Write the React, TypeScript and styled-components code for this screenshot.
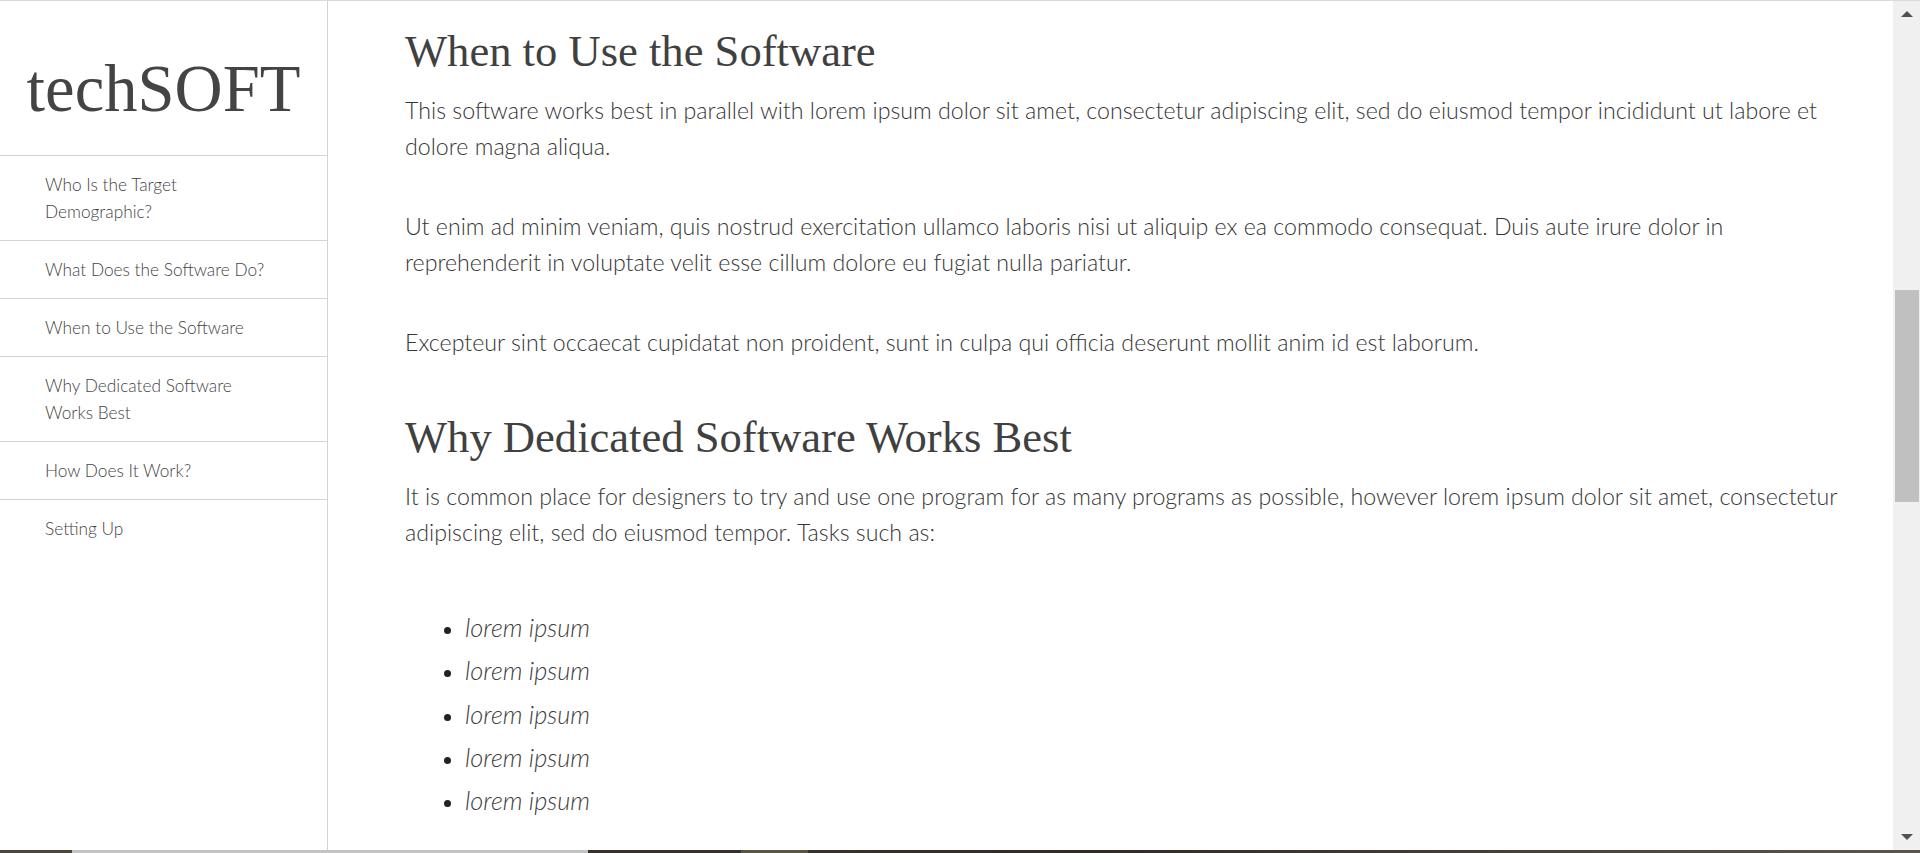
import React from "react";
import styled, { createGlobalStyle } from "styled-components";

const GlobalStyle = createGlobalStyle`
  html, body {
    margin: 0;
    padding: 0;
    height: 100%;
    overflow: hidden;
    background: #fff;
  }
  #root {
    height: 100%;
  }
`;

const Page = styled.div`
  display: flex;
  flex-direction: column;
  height: 853px;
  border-top: 1px solid #dadada;
  box-sizing: border-box;
  font-family: Lato, "Open Sans", sans-serif;
  color: #363636;
`;

const Body = styled.div`
  display: flex;
  flex: 1;
  min-height: 0;
`;

const Nav = styled.nav`
  width: 327px;
  flex-shrink: 0;
  border-right: 1px solid #d3d3d3;
  display: flex;
  flex-direction: column;
`;

const Brand = styled.header`
  height: 155px;
  box-sizing: border-box;
  padding-top: 50px;
  border-bottom: 1px solid #d3d3d3;
  text-align: center;
  font-family: "Liberation Serif", "Times New Roman", serif;
  font-size: 66.6px;
  line-height: 75px;
  color: #444;
`;

const NavLink = styled.a`
  display: block;
  padding: 15px 52px 15px 45px;
  font-size: 17.3px;
  font-weight: 300;
  line-height: 27px;
  color: #444;
  text-decoration: none;

  & + & {
    border-top: 1px solid #d3d3d3;
  }
`;

const Main = styled.main`
  flex: 1;
  min-width: 0;
  overflow: hidden;
  padding: 24px 40px 0 77px;
`;

const Section = styled.section`
  & + & {
    padding-top: 7px;
  }
`;

const SectionTitle = styled.h2`
  margin: 0 0 15px;
  font-family: "Liberation Serif", "Times New Roman", serif;
  font-size: 44.6px;
  font-weight: 400;
  line-height: 52px;
  color: #404040;
`;

const Paragraph = styled.p`
  margin: 0 0 44px;
  font-size: 23.2px;
  font-weight: 300;
  line-height: 36px;
`;

const TaskList = styled.ul`
  margin: 0;
  padding: 12px 0 0 60px;
`;

const TaskItem = styled.li`
  font-size: 25.3px;
  font-style: italic;
  font-weight: 300;
  line-height: 43.3px;
  color: #3d3d3d;

  &::marker {
    color: #222;
    font-size: 22px;
  }
`;

const Scrollbar = styled.div`
  width: 27px;
  flex-shrink: 0;
  background: #f0f0f0;
  display: flex;
  flex-direction: column;
  align-items: center;
  justify-content: space-between;
  padding: 10px 0 10px;
  box-sizing: border-box;
  position: relative;
`;

const Arrow = styled.span<{ $down?: boolean }>`
  width: 0;
  height: 0;
  border-left: 6px solid transparent;
  border-right: 6px solid transparent;
  ${({ $down }) =>
    $down ? "border-top: 6px solid #505050;" : "border-bottom: 6px solid #505050;"}
`;

const Thumb = styled.span`
  position: absolute;
  left: 2px;
  right: 1px;
  top: 289px;
  height: 212px;
  background: #c0c0c0;
`;

const TaskbarEdge = styled.div`
  height: 3px;
  flex-shrink: 0;
  background: linear-gradient(
    to right,
    #4b473c 0,
    #4b473c 72px,
    #c3c3c3 72px,
    #c3c3c3 588px,
    #35322a 588px,
    #35322a 741px,
    #5b563f 741px,
    #5b563f 808px,
    #35322a 808px,
    #2f2c25 1100px,
    #5a5649 1920px
  );
`;

const navItems = [
  "Who Is the Target Demographic?",
  "What Does the Software Do?",
  "When to Use the Software",
  "Why Dedicated Software Works Best",
  "How Does It Work?",
  "Setting Up",
];

const App = () => {
  return (
    <>
      <GlobalStyle />
      <Page>
        <Body>
          <Nav>
            <Brand>techSOFT</Brand>
            {navItems.map((item) => (
              <NavLink key={item} href={`#${item.replace(/\s+/g, "_")}`}>
                {item}
              </NavLink>
            ))}
          </Nav>
          <Main>
            <Section id="When_to_Use_the_Software">
              <SectionTitle>When to Use the Software</SectionTitle>
              <Paragraph>
                This software works best in parallel with lorem ipsum dolor sit amet,
                consectetur adipiscing elit, sed do eiusmod tempor incididunt ut labore
                et dolore magna aliqua.
              </Paragraph>
              <Paragraph>
                Ut enim ad minim veniam, quis nostrud exercitation ullamco laboris nisi
                ut aliquip ex ea commodo consequat. Duis aute irure dolor in
                reprehenderit in voluptate velit esse cillum dolore eu fugiat nulla
                pariatur.
              </Paragraph>
              <Paragraph>
                Excepteur sint occaecat cupidatat non proident, sunt in culpa qui
                officia deserunt mollit anim id est laborum.
              </Paragraph>
            </Section>
            <Section id="Why_Dedicated_Software_Works_Best">
              <SectionTitle>Why Dedicated Software Works Best</SectionTitle>
              <Paragraph>
                It is common place for designers to try and use one program for as many
                programs as possible, however lorem ipsum dolor sit amet, consectetur
                adipiscing elit, sed do eiusmod tempor. Tasks such as:
              </Paragraph>
              <TaskList>
                <TaskItem>lorem ipsum</TaskItem>
                <TaskItem>lorem ipsum</TaskItem>
                <TaskItem>lorem ipsum</TaskItem>
                <TaskItem>lorem ipsum</TaskItem>
                <TaskItem>lorem ipsum</TaskItem>
              </TaskList>
            </Section>
          </Main>
          <Scrollbar>
            <Arrow />
            <Thumb />
            <Arrow $down />
          </Scrollbar>
        </Body>
        <TaskbarEdge />
      </Page>
    </>
  );
};

export default App;
